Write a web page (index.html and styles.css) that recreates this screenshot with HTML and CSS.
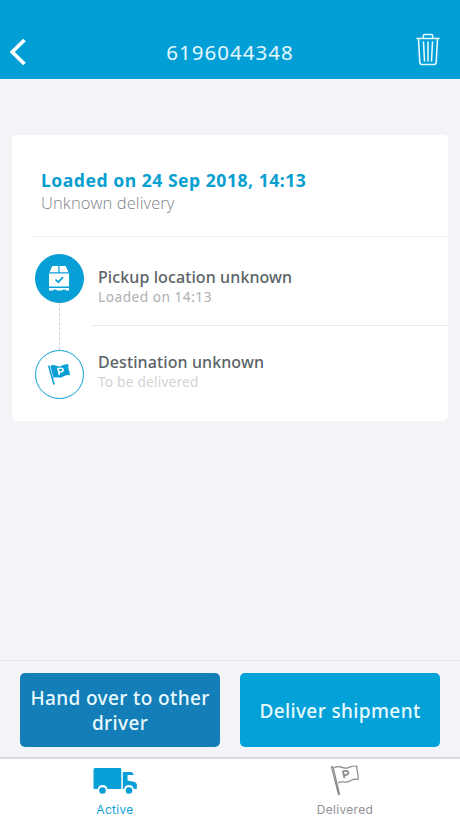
FILE: index.html
```html
<!DOCTYPE html>
<html lang="en">
<head>
<meta charset="utf-8">
<title>6196044348</title>
<link rel="stylesheet" href="styles.css">
</head>
<body>
<div class="app">
  <header class="header">
    <svg class="back" width="18" height="28" viewBox="0 0 18 28"><path d="M15.500 2 3.200 14l12.300 12" fill="none" stroke="#fff" stroke-width="3.700"/></svg>
    <h1 class="title"><span>6196044348</span></h1>
    <svg class="trash" width="26" height="34" viewBox="0 0 26 34" fill="none" stroke="#e4f8fd" stroke-width="1.600" stroke-linecap="round" stroke-linejoin="round"><path d="M2 5.500h22M8.300 5V3q0-1.500 1.500-1.500h6.400q1.500 0 1.500 1.500v2M3.500 6l1.300 23q.2 2.500 2 2.500h12.400q1.800 0 2-2.500L22.500 6M8.500 9l1 19M13 9v19M17.500 9l-1 19"/></svg>
  </header>
  <main class="content">
    <section class="card">
      <div class="summary">
        <h2 class="loaded"><span>Loaded on 24 Sep 2018, 14:13</span></h2>
        <p class="delivery"><span>Unknown delivery</span></p>
      </div>
      <div class="route">
        <div class="rail">
          <div class="stop filled">
            <svg width="24" height="28" viewBox="0 0 24 28"><path fill="#fff" d="M5.300 1h6v6.200H2.500zM12.500 1h6.200l2.800 6.200h-9zM2 8.400h20v13.100H2zM2 23h20v2.500h-3l-1-1h-2l-1 1h-5l-1-1H7l-1 1H2z"/><path d="m8.500 14.500 2.800 2.700 4.700-5" fill="none" stroke="#079fd5" stroke-width="1.700"/></svg>
          </div>
          <div class="link"></div>
          <div class="stop">
            <svg width="28" height="28" viewBox="0 0 26 26"><path d="m3.400 4.300 5 17.500" fill="none" stroke="#079fd5" stroke-width="1.500"/><path fill="#079fd5" d="M5 4.500c4-2.500 6.500 1.800 10 .2 2.500-1.200 4-2.200 7-1.300-1.500 3 1.800 7 1 10-4-1.800-6 2-9 2-2.500.2-4-1-6.200.2z"/><path d="m13.300 13-1.200-5.800 2.400-.4c2.800-.3 3.200 2.700.7 3.200l-2.300.4" fill="none" stroke="#fff" stroke-width="1.500"/></svg>
          </div>
        </div>
        <div class="places">
          <div class="place pickup">
            <h3><span>Pickup location unknown</span></h3>
            <p><span>Loaded on 14:13</span></p>
          </div>
          <div class="place destination">
            <h3><span>Destination unknown</span></h3>
            <p><span>To be delivered</span></p>
          </div>
        </div>
      </div>
    </section>
  </main>
  <div class="actions">
    <button class="handover">Hand over to other driver</button>
    <button class="deliver"><span>Deliver shipment</span></button>
  </div>
  <nav class="tabs">
    <a class="tab active">
      <svg width="46" height="32" viewBox="0 0 46 32" fill="#079fd5"><path d="M3 3h25q1.300 0 1.300 1.300V24H15.500a5 5 0 0 0-9.800 0H2.500q-1 0-1-1V4.500Q1.500 3 3 3zM30.800 7H40l2 3h-6.500v5.500l7.500 1.500 1.800 2V24h-3a5 5 0 0 0-9.800 0h-1.200z"/><circle cx="10.500" cy="25.500" r="3.300"/><circle cx="37" cy="25.500" r="3.300"/></svg>
      <span>Active</span>
    </a>
    <a class="tab delivered">
      <svg width="30" height="32" viewBox="0 0 30 32" fill="none" stroke="#8b8b8d" stroke-width="1.200"><path d="m1.500 2 7 27.500 1-.3L3 1.700zM4.500 3c4.500-4 8.500 1.500 13 0 3.500-1.200 5.500-3 9.500-1.600-1.200 3 2.200 8 1 13.100-5-2-7 2.200-11.500 2.600-3.500.3-5.300-1.500-8.500 1"/><path stroke-width="1.700" d="M14.500 13.300 13 6.500l2.500-.6c3.500-.5 4 3.200.7 4l-2.300.4"/></svg>
      <span>Delivered</span>
    </a>
  </nav>
</div>
</body>
</html>
```

FILE: styles.css
```css
* { box-sizing: border-box; }
body, h1, h2, h3, p { margin: 0; }
body { font-family: "Noto Sans", sans-serif; background: #f2f4f8; }
.app { display: flex; flex-direction: column; width: 460px; height: 818px; overflow: hidden; }
svg { display: block; flex: none; }
.header { display: grid; grid-template-columns: 40px 1fr 40px; align-items: center; height: 79px; padding: 24px 8px 0; background: #029fd7; }
.trash { margin: 0 0 4px 3px; }
.back { margin-left: 1px; }
.title { color: #e4f8fd; font-size: 20.5px; line-height: 28px; font-weight: 400; letter-spacing: 1px; text-align: center; }
.content { flex: 1; padding: 56px 12px 0; }
.card { height: 286px; background: #fff; border-radius: 5px; }
.summary { height: 102px; margin-left: 20px; padding: 34px 0 0 9px; border-bottom: 1px solid #eff0f1; }
.loaded { color: #079fd0; font-size: 17.6px; line-height: 23px; font-weight: 700; letter-spacing: .5px; white-space: nowrap; }
.delivery { color: #7d8185; font-family: "Open Sans", sans-serif; font-weight: 300; font-size: 16.5px; line-height: 22px; letter-spacing: .1px; }
.route { display: flex; padding: 17px 0 0 22px; }
.rail { display: flex; flex-direction: column; align-items: center; width: 50px; }
.stop { display: flex; align-items: center; justify-content: center; width: 49px; height: 49px; border: 1.5px solid #079fd5; border-radius: 50%; }
.filled { background: #079fd5; }
.link { width: 0; height: 47px; border-left: 1px dashed #cdd1d3; }
.places { flex: 1; margin-left: 7px; }
.place { padding-left: 7px; }
.pickup { height: 72px; padding-top: 12px; border-bottom: 1px solid #e9eaeb; }
.destination { padding-top: 25px; }
.place h3 { color: #5b6367; font-size: 16px; line-height: 22px; font-weight: 500; letter-spacing: .1px; white-space: nowrap; }
.place p { font-size: 13.7px; line-height: 17px; letter-spacing: .5px; color: #aeb0b2; }
.destination p { color: #d2d3d4; letter-spacing: .2px; }
.actions { display: flex; gap: 20px; height: 97px; padding: 12px 20px 11px; border-top: 1px solid #e3e5e8; }
button { flex: 1; height: 74px; border: 0; border-radius: 5px; padding: 2px 0 0; color: #e9faff; font: 500 19px/25px "Noto Sans", sans-serif; letter-spacing: .38px; }
.handover { background: #147eb9; }
.deliver { background: #02a1d8; }
.tabs { display: flex; height: 61px; border-top: 2px solid #dadbdf; background: #fff; }
.tab { flex: 1; display: flex; flex-direction: column; align-items: center; padding-top: 6px; color: #929294; font: 12px/16px Inter, sans-serif; letter-spacing: .3px; }
.tab span { margin-top: 5px; }
.active { color: #139fd2; }
```
